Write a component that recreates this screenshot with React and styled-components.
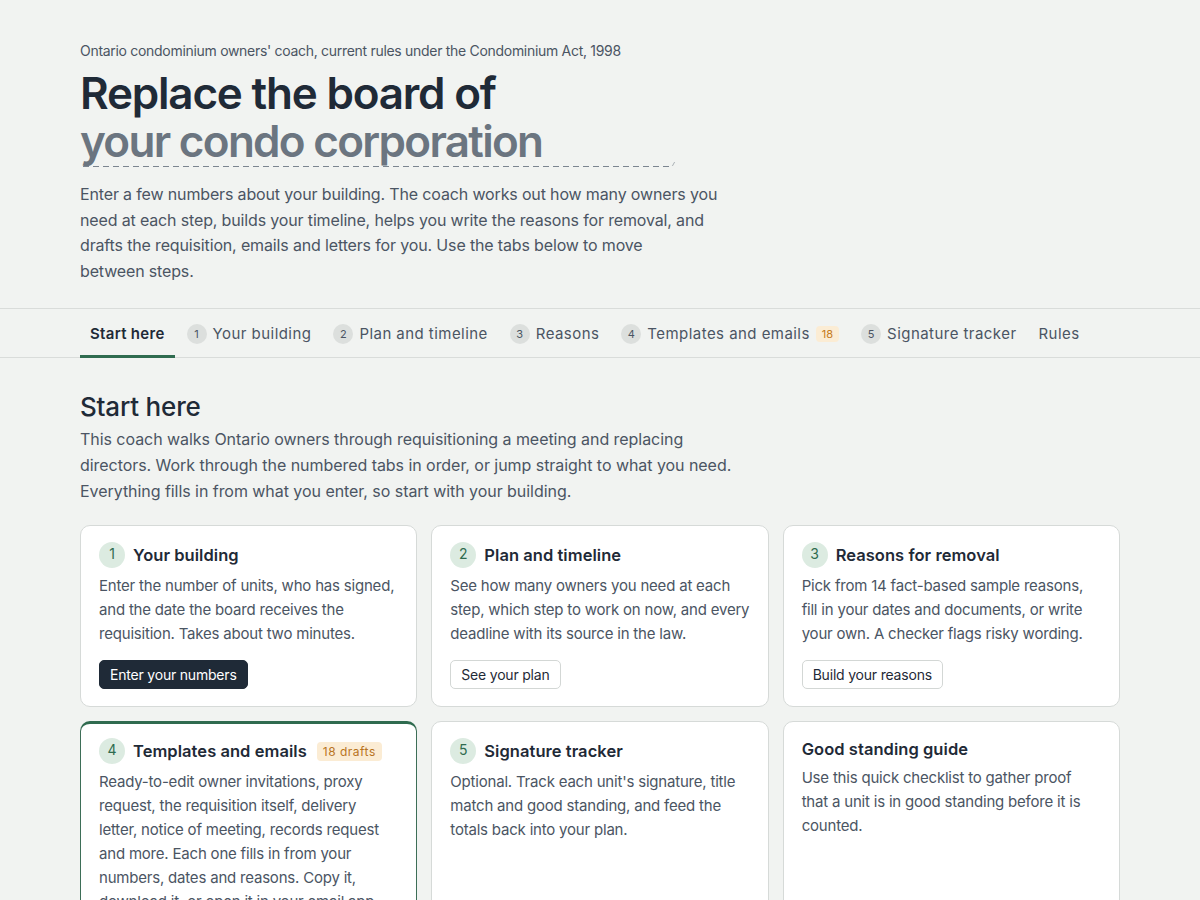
import React from 'react';
import styled, { createGlobalStyle, css } from 'styled-components';

const GlobalStyle = createGlobalStyle`
  * { box-sizing: border-box; }
  body {
    margin: 0;
    background: #f1f3f1;
    font-family: Inter, "Noto Sans", "Liberation Sans", sans-serif;
    color: #1f2a37;
  }
`;

const Header = styled.header`
  padding: 42px 80px 24px;
  border-bottom: 1px solid #d9dcda;
`;

const Kicker = styled.p`
  margin: 0 0 9px;
  font-size: 14px;
  color: #4b5563;
  letter-spacing: -0.3px;
`;

const Title = styled.h1`
  margin: 0;
  font-size: 44px;
  font-weight: 600;
  line-height: 50px;
  letter-spacing: -1.2px;
  color: #1f2a37;
`;

const Editable = styled.div`
  position: relative;
  width: 586px;
  margin-left: 3px;
  font-size: 44px;
  font-weight: 600;
  line-height: 47px;
  letter-spacing: -1.7px;
  color: #6b7580;
  text-indent: -3px;
  padding-bottom: 2px;
  background-image: repeating-linear-gradient(to right, #7b8590 0 6px, transparent 6px 10px);
  background-size: 100% 1.5px;
  background-position: left bottom;
  background-repeat: no-repeat;
  &::after {
    content: '';
    position: absolute;
    right: -5px;
    bottom: 1px;
    width: 1px;
    height: 4px;
    background: #aab0b5;
    transform: skewX(-30deg);
  }
`;

const Lede = styled.p`
  margin: 15px 0 0;
  font-size: 16px;
  line-height: 25.6px;
  letter-spacing: -0.15px;
  white-space: pre-line;
  color: #4b5563;
`;

const TabBar = styled.nav`
  display: flex;
  gap: 2px;
  padding: 0 80px;
  border-bottom: 1px solid #d9dcda;
`;

const Tab = styled.button`
  display: flex;
  align-items: center;
  gap: 6px;
  height: 49px;
  padding: 3px 10px 0;
  margin-bottom: -1px;
  border: none;
  border-bottom: 3px solid transparent;
  background: none;
  font-family: inherit;
  font-size: 15px;
  letter-spacing: 0.45px;
  color: #4b5563;
  cursor: pointer;
  ${p => p.$active && css`
    color: #1f2a37;
    font-weight: 600;
    letter-spacing: 0.3px;
    border-bottom-color: #2f6b4f;
  `}
`;

const TabNum = styled.span`
  display: inline-flex;
  align-items: center;
  justify-content: center;
  width: 20px;
  height: 20px;
  border-radius: 50%;
  background: #dcdfdd;
  font-size: 11px;
  letter-spacing: 0;
  color: #4b5563;
`;

const Count = styled.span`
  padding: 1px 6px;
  border-radius: 4px;
  background: #fbecd4;
  color: #c47a20;
  font-size: 11px;
  letter-spacing: 0;
`;

const Main = styled.main`
  padding: 32px 80px 0;
`;

const H2 = styled.h2`
  margin: 0;
  font-size: 26px;
  font-weight: 500;
  line-height: 34px;
  letter-spacing: -0.2px;
  color: #1f2a37;
`;

const Intro = styled.p`
  margin: 3px 0 0;
  max-width: 670px;
  font-size: 16px;
  line-height: 25.6px;
  letter-spacing: -0.05px;
  color: #4b5563;
`;

const Grid = styled.div`
  display: grid;
  grid-template-columns: repeat(3, 1fr);
  gap: 14px;
  margin-top: 21px;
`;

const Card = styled.section`
  display: flex;
  flex-direction: column;
  align-items: flex-start;
  padding: 16px 18px 17px;
  min-height: 182px;
  background: #fff;
  border: 1px solid #d6dad8;
  border-radius: 10px;
  ${p => p.$highlight && css`
    border-color: #3d6e57;
    border-top: 3px solid #2f6b4f;
    padding-top: 14px;
  `}
`;

const CardHead = styled.div`
  display: flex;
  align-items: center;
  gap: 8px;
  margin-bottom: 6px;
`;

const StepNum = styled.span`
  display: inline-flex;
  align-items: center;
  justify-content: center;
  width: 26px;
  height: 26px;
  border-radius: 50%;
  background: #dcebe1;
  color: #2f6b4f;
  font-size: 14px;
  padding-bottom: 3px;
`;

const CardTitle = styled.h3`
  margin: 0;
  font-size: 16.5px;
  line-height: 22px;
  font-weight: 600;
  letter-spacing: 0.05px;
  color: #1f2a37;
`;

const Drafts = styled.span`
  padding: 2px 6px;
  border-radius: 4px;
  background: #fbecd4;
  color: #b8741f;
  font-size: 12px;
  letter-spacing: 0.5px;
  margin-left: 2px;
`;

const CardText = styled.p`
  margin: 0;
  font-size: 15px;
  line-height: 24px;
  letter-spacing: -0.2px;
  white-space: pre;
  color: #4b5563;
`;

const Footer = styled.div`
  margin-top: auto;
  padding-top: 14px;
`;

const Action = styled.button`
  height: 29px;
  padding: 0 10px;
  border-radius: 5px;
  font-family: inherit;
  font-size: 14px;
  letter-spacing: -0.2px;
  cursor: pointer;
  background: #fff;
  color: #1f2a37;
  border: 1px solid #d3d7d5;
  ${p => p.$primary && css`
    background: #1f2a37;
    border-color: #1f2a37;
    color: #fff;
  `}
`;

const tabs = [
  { label: 'Start here', active: true },
  { n: 1, label: 'Your building' },
  { n: 2, label: 'Plan and timeline' },
  { n: 3, label: 'Reasons' },
  { n: 4, label: 'Templates and emails', count: 18 },
  { n: 5, label: 'Signature tracker' },
  { label: 'Rules' },
];

const cards = [
  {
    n: 1,
    title: 'Your building',
    text: 'Enter the number of units, who has signed,\nand the date the board receives the\nrequisition. Takes about two minutes.',
    action: 'Enter your numbers',
    primary: true,
  },
  {
    n: 2,
    title: 'Plan and timeline',
    text: 'See how many owners you need at each\nstep, which step to work on now, and every\ndeadline with its source in the law.',
    action: 'See your plan',
  },
  {
    n: 3,
    title: 'Reasons for removal',
    text: 'Pick from 14 fact-based sample reasons,\nfill in your dates and documents, or write\nyour own. A checker flags risky wording.',
    action: 'Build your reasons',
  },
  {
    n: 4,
    title: 'Templates and emails',
    badge: '18 drafts',
    highlight: true,
    text: 'Ready-to-edit owner invitations, proxy\nrequest, the requisition itself, delivery\nletter, notice of meeting, records request\nand more. Each one fills in from your\nnumbers, dates and reasons. Copy it,\ndownload it, or open it in your email app.',
    action: 'Open templates',
  },
  {
    n: 5,
    title: 'Signature tracker',
    text: "Optional. Track each unit's signature, title\nmatch and good standing, and feed the\ntotals back into your plan.",
    action: 'Track signatures',
  },
  {
    title: 'Good standing guide',
    text: 'Use this quick checklist to gather proof\nthat a unit is in good standing before it is\ncounted.',
    action: 'Open the guide',
  },
];

const lede =
  'Enter a few numbers about your building. The coach works out how many owners you\n' +
  'need at each step, builds your timeline, helps you write the reasons for removal, and\n' +
  'drafts the requisition, emails and letters for you. Use the tabs below to move\n' +
  'between steps.';

export default function App() {
  return (
    <>
      <GlobalStyle />
      <Header>
        <Kicker>Ontario condominium owners' coach, current rules under the Condominium Act, 1998</Kicker>
        <Title>Replace the board of</Title>
        <Editable>your condo corporation</Editable>
        <Lede>{lede}</Lede>
      </Header>

      <TabBar>
        {tabs.map(t => (
          <Tab key={t.label} $active={t.active}>
            {t.n && <TabNum>{t.n}</TabNum>}
            {t.label}
            {t.count && <Count>{t.count}</Count>}
          </Tab>
        ))}
      </TabBar>

      <Main>
        <H2>Start here</H2>
        <Intro>
          This coach walks Ontario owners through requisitioning a meeting and replacing directors. Work through
          the numbered tabs in order, or jump straight to what you need. Everything fills in from what you enter,
          so start with your building.
        </Intro>

        <Grid>
          {cards.map(c => (
            <Card key={c.title} $highlight={c.highlight}>
              <CardHead>
                {c.n && <StepNum>{c.n}</StepNum>}
                <CardTitle>{c.title}</CardTitle>
                {c.badge && <Drafts>{c.badge}</Drafts>}
              </CardHead>
              <CardText>{c.text}</CardText>
              <Footer>
                <Action $primary={c.primary}>{c.action}</Action>
              </Footer>
            </Card>
          ))}
        </Grid>
      </Main>
    </>
  );
}
